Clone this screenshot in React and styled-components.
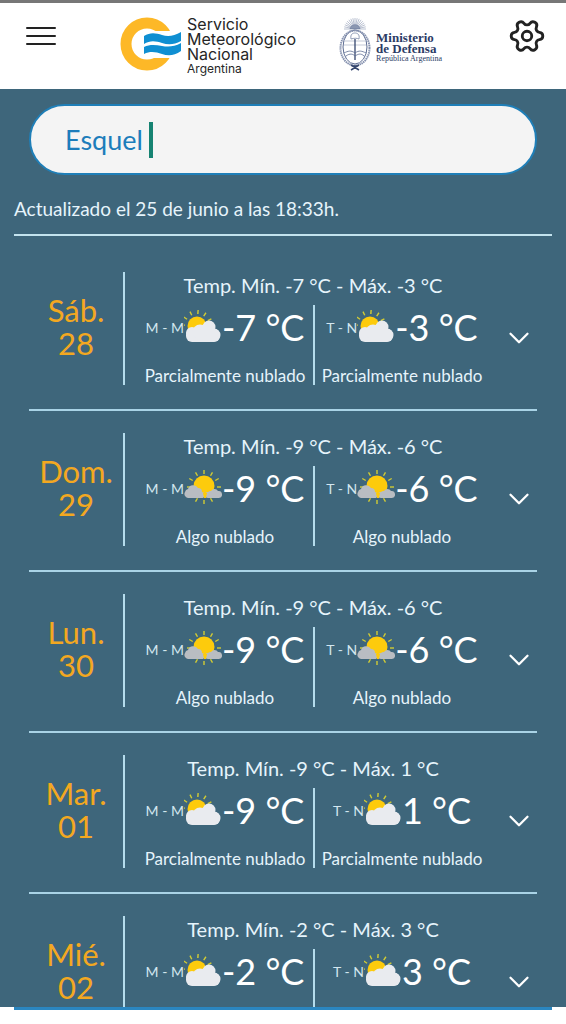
import { useState } from "react";
import styled, { createGlobalStyle } from "styled-components";
import { ChevronDown, Settings } from "lucide-react";

const forecast = [
  {
    day: "Sáb.",
    date: "28",
    range: "Temp. Mín. -7 °C - Máx. -3 °C",
    morning: { temp: "-7 °C", sky: "Parcialmente nublado" },
    evening: { temp: "-3 °C", sky: "Parcialmente nublado" },
  },
  {
    day: "Dom.",
    date: "29",
    range: "Temp. Mín. -9 °C - Máx. -6 °C",
    morning: { temp: "-9 °C", sky: "Algo nublado" },
    evening: { temp: "-6 °C", sky: "Algo nublado" },
  },
  {
    day: "Lun.",
    date: "30",
    range: "Temp. Mín. -9 °C - Máx. -6 °C",
    morning: { temp: "-9 °C", sky: "Algo nublado" },
    evening: { temp: "-6 °C", sky: "Algo nublado" },
  },
  {
    day: "Mar.",
    date: "01",
    range: "Temp. Mín. -9 °C - Máx. 1 °C",
    morning: { temp: "-9 °C", sky: "Parcialmente nublado" },
    evening: { temp: "1 °C", sky: "Parcialmente nublado" },
  },
  {
    day: "Mié.",
    date: "02",
    range: "Temp. Mín. -2 °C - Máx. 3 °C",
    morning: { temp: "-2 °C", sky: "Parcialmente nublado" },
    evening: { temp: "3 °C", sky: "Parcialmente nublado" },
  },
];

const range = (n) => Array.from({ length: n }, (_, i) => i);

function SunRays({ cx, cy, from, to, start = 0, count = 12 }) {
  return range(count).map((i) => {
    const a = ((start + i * 30) * Math.PI) / 180;
    return (
      <line
        key={i}
        x1={cx + from * Math.cos(a)}
        y1={cy + from * Math.sin(a)}
        x2={cx + to * Math.cos(a)}
        y2={cy + to * Math.sin(a)}
        stroke="#d2cc34"
        strokeWidth="1.4"
      />
    );
  });
}

function WeatherIcon({ sky }) {
  if (sky === "Algo nublado") {
    return (
      <IconBox viewBox="0 0 38 36" role="img" aria-label={sky}>
        <SunRays cx={20} cy={17} from={13} to={17} />
        <circle cx="20" cy="16" r="10.5" fill="#fdcb0c" />
        <path
          d="M4 28a4 4 0 0 1-3-6 4 4 0 0 1 3-3 5.500 5.500 0 0 1 10-1 4 4 0 0 1 4 4 3.200 3.200 0 0 1 1 6z"
          fill="#b9bdc2"
        />
        <path
          d="M24 28a3 3 0 0 1 0-6 4 4 0 0 1 3-1 4 4 0 0 1 7 0 3.500 3.500 0 0 1 1 7z"
          fill="#b9bdc2"
        />
        <path d="M19 23h4l-1 5h-2z" fill="#fdcb0c" />
      </IconBox>
    );
  }
  return (
    <IconBox viewBox="0 0 38 36" role="img" aria-label={sky}>
      <SunRays cx={13} cy={17} from={12} to={16} start={184} count={6} />
      <circle cx="13" cy="17" r="9.5" fill="#fdcb0c" />
      <rect x="2" y="20" width="34" height="13" rx="6" fill="#e9ebef" />
      <circle cx="8" cy="24" r="6" fill="#e9ebef" />
      <circle cx="16" cy="23" r="7.5" fill="#e9ebef" />
      <circle cx="25" cy="18" r="6.5" fill="#e9ebef" />
      <circle cx="30" cy="26" r="6.500" fill="#e9ebef" />
    </IconBox>
  );
}

function SmnMark() {
  return (
    <svg width="62" height="54" viewBox="0 0 62 54" aria-hidden="true">
      <circle cx="27" cy="27" r="21" fill="none" stroke="#fdb827" strokeWidth="11" />
      <path d="M22 14h40v26c-3 2-7 2-10 1H22z" fill="#fff" />
      <path
        d="M24 19c6-4 12-3 18-1s12 1 19-3v9c-7 4-13 4-19 2s-12-3-18 1z"
        fill="#0f8fd2"
      />
      <path
        d="M24 30c6-3 12-2 18-1s12 1 19-3v8c-7 5-13 5-19 3s-12-3-18 0z"
        fill="#0f8fd2"
      />
    </svg>
  );
}

function Emblem() {
  return (
    <svg
      width="34"
      height="54"
      viewBox="0 0 34 54"
      fill="none"
      stroke="#5c6c92"
      aria-hidden="true"
    >
      {range(17).map((i) => {
        const a = ((180 + i * 11.25) * Math.PI) / 180;
        return (
          <line
            key={i}
            x1={17 + 5 * Math.cos(a)}
            y1={12 + 5 * Math.sin(a)}
            x2={17 + 11 * Math.cos(a)}
            y2={12 + 11 * Math.sin(a)}
            strokeWidth="0.6"
            stroke="#8b97b1"
          />
        );
      })}
      <path d="M12 12a5 4.500 0 0 1 10 0z" fill="#8b97b1" strokeWidth="0.5" />
      <ellipse cx="17" cy="30" rx="12" ry="17" fill="#fff" strokeWidth="1" />
      <ellipse
        cx="17"
        cy="31"
        rx="14.500"
        ry="17.500"
        strokeWidth="2"
        strokeDasharray="1.500 0.600"
        stroke="#8793b0"
      />
      <path d="M6 24h22M6 28h22" strokeWidth="0.6" stroke="#9ba6bd" />
      <path
        d="M13 22c-1-5 2-6 4-6s5 1 4 6c-2-1-5-1-8 0z"
        strokeWidth="0.8"
        stroke="#7785a5"
      />
      <path d="M17 22v21" strokeWidth="1.300" stroke="#35466e" />
      <path d="M6 36c4-2 7-3 11 0 4-3 7-2 11 0M8 39c4-3 7-2 9 0 3-2 6-3 9 0" strokeWidth="0.8" />
      <path d="M13 48l8 5M21 48l-8 5M15 49h4" strokeWidth="1.500" stroke="#35466e" />
    </svg>
  );
}

function Period({ label, temp, sky }) {
  return (
    <PeriodBox>
      <Reading>
        <PeriodLabel>{label}</PeriodLabel>
        <WeatherIcon sky={sky} />
        <Temp>{temp}</Temp>
      </Reading>
      <Sky>{sky}</Sky>
    </PeriodBox>
  );
}

function App() {
  const [city, setCity] = useState("Esquel");

  return (
    <Page>
      <GlobalStyle />
      <Header>
        <MenuButton aria-label="Menú">
          <Bar />
          <Bar />
          <Bar />
        </MenuButton>
        <Brand href="#smn">
          <SmnMark />
          <BrandText>
            Servicio
            <br />
            Meteorológico
            <br />
            Nacional
            <small>Argentina</small>
          </BrandText>
        </Brand>
        <Ministry href="#defensa">
          <Emblem />
          <MinistryText>
            Ministerio
            <br />
            de Defensa
            <small>República Argentina</small>
          </MinistryText>
        </Ministry>
        <GearButton aria-label="Configuración">
          <Settings size={38} strokeWidth={1.8} />
        </GearButton>
      </Header>
      <Main>
        <Search>
          <SearchInput
            aria-label="Localidad"
            value={city}
            onChange={(e) => setCity(e.target.value)}
          />
          <Caret />
        </Search>
        <Updated>Actualizado el 25 de junio a las 18:33h.</Updated>
        <List>
          {forecast.map((item) => (
            <Row key={item.date}>
              <Day>
                {item.day}
                <br />
                {item.date}
              </Day>
              <Detail>
                <Range>{item.range}</Range>
                <Periods>
                  <Period label="M - M" {...item.morning} />
                  <Period label="T - N" {...item.evening} />
                </Periods>
              </Detail>
              <MoreButton aria-label={`Ver ${item.day} ${item.date}`}>
                <ChevronDown size={34} strokeWidth={1.6} />
              </MoreButton>
            </Row>
          ))}
        </List>
      </Main>
      <Footer />
    </Page>
  );
}

const GlobalStyle = createGlobalStyle`
  * {
    box-sizing: border-box;
  }

  body {
    margin: 0;
    background: #fff;
    font-family: "Lato", "Noto Sans", sans-serif;
  }

  button {
    padding: 0;
    border: none;
    background: none;
    cursor: pointer;
  }
`;

const Page = styled.div`
  display: flex;
  flex-direction: column;
  height: 100vh;
`;

const Header = styled.header`
  display: flex;
  flex: none;
  align-items: flex-start;
  justify-content: space-between;
  padding: 14px 20px 14px 26px;
  border-top: 3px solid #777;
`;

const MenuButton = styled.button`
  display: flex;
  flex-direction: column;
  gap: 6px;
  width: 30px;
  padding-top: 10px;
`;

const Bar = styled.span`
  height: 2px;
  border-radius: 1px;
  background: #222;
`;

const Brand = styled.a`
  display: flex;
  gap: 5px;
  margin-left: 22px;
  color: #262626;
  text-decoration: none;
`;

const BrandText = styled.span`
  font-family: "Inter", sans-serif;
  font-size: 16px;
  line-height: 15px;

  small {
    display: block;
    font-size: 12px;
    line-height: 13px;
  }
`;

const Ministry = styled.a`
  display: flex;
  gap: 4px;
  color: #2c3c66;
  text-decoration: none;
`;

const MinistryText = styled.span`
  padding-top: 15px;
  font-family: "Liberation Serif", serif;
  font-size: 13px;
  font-weight: 700;
  line-height: 11px;

  small {
    display: block;
    font-size: 8px;
    font-weight: 400;
    line-height: 9px;
  }
`;

const GearButton = styled.button`
  display: flex;
  margin-left: 24px;
  color: #222;

  svg {
    transform: rotate(90deg);
  }
`;

const Main = styled.main`
  flex: 1;
  min-height: 0;
  overflow-y: auto;
  scrollbar-width: none;
  padding: 15px 14px 0;
  background: #3e667b;
  color: #e6f4fb;
`;

const Search = styled.div`
  display: flex;
  align-items: center;
  gap: 6px;
  height: 71px;
  margin: 0 15px;
  padding: 0 34px;
  border: 2px solid #1f7fb8;
  border-radius: 36px;
  background: #f4f4f4;
`;

const SearchInput = styled.input`
  field-sizing: content;
  padding: 0;
  border: none;
  outline: none;
  background: none;
  color: #1c7dbb;
  font-family: inherit;
  font-size: 27px;
`;

const Caret = styled.span`
  width: 4px;
  height: 36px;
  background: #168372;
`;

const Updated = styled.p`
  margin: 0;
  padding: 20px 0 12px;
  border-bottom: 2px solid #c3e3ee;
  font-size: 19px;
  line-height: 27px;
`;

const List = styled.ul`
  margin: 0;
  padding: 14px 15px 0;
  list-style: none;
`;

const Row = styled.li`
  display: grid;
  grid-template-columns: 94px 1fr 36px;
  padding: 22px 0 24px;
  border-bottom: 2px solid #a9d3e6;
`;

const Day = styled.div`
  display: flex;
  align-items: center;
  justify-content: center;
  padding-bottom: 4px;
  color: #f3a821;
  font-size: 31px;
  line-height: 33px;
  text-align: center;
`;

const Detail = styled.div`
  padding: 0 12px;
  border-left: 2px solid #b5dcec;
`;

const Range = styled.div`
  padding-bottom: 6px;
  font-size: 20px;
  line-height: 27px;
  text-align: center;
`;

const Periods = styled.div`
  display: grid;
  grid-template-columns: 1fr 1fr;
`;

const PeriodBox = styled.div`
  height: 80px;
  text-align: center;

  & + & {
    border-left: 2px solid #b5dcec;
  }
`;

const Reading = styled.div`
  display: flex;
  align-items: center;
  justify-content: center;
  height: 44px;
  white-space: nowrap;
`;

const PeriodLabel = styled.span`
  color: #d3e6ef;
  font-size: 14px;
`;

const IconBox = styled.svg`
  flex: none;
  width: 38px;
  height: 36px;
`;

const Temp = styled.span`
  color: #fff;
  font-size: 36px;
`;

const Sky = styled.div`
  padding-top: 15px;
  font-size: 17px;
  line-height: 24px;
  white-space: nowrap;
`;

const MoreButton = styled.button`
  display: flex;
  align-items: center;
  justify-content: center;
  padding-top: 18px;
  color: #fff;
`;

const Footer = styled.footer`
  flex: none;
  height: 17px;
  margin: 0 14px;
  border-top: 3px solid #2a86c0;
`;

export default App;
